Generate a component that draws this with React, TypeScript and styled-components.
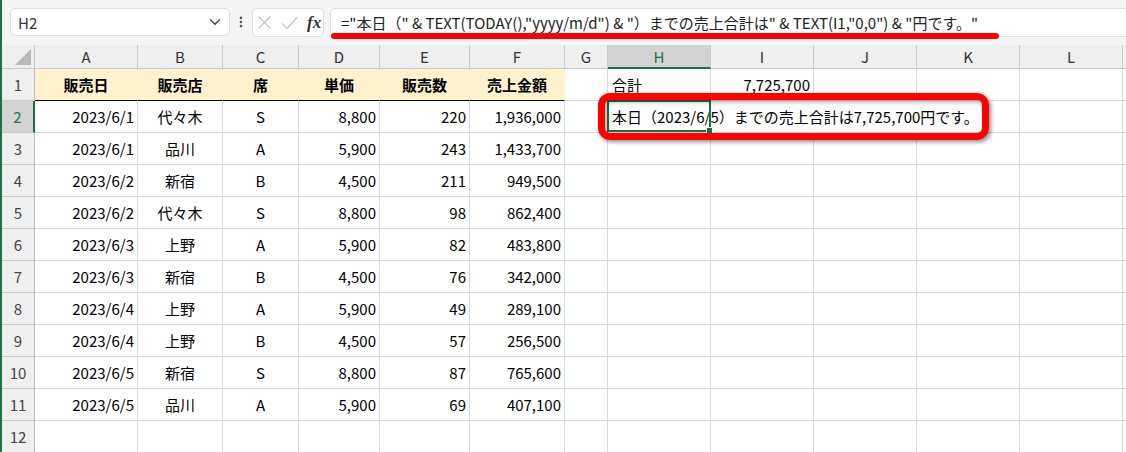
import React from "react";
import styled, { createGlobalStyle } from "styled-components";
import { ChevronDown, EllipsisVertical } from "lucide-react";

const FONT = `"Noto Sans CJK JP", "Noto Sans", sans-serif`;
const EXCEL_GREEN = "#1e7145";
const GRID = "#dadada";
const HEADER_BG = "#efefef";
const HEADER_ACTIVE = "#d3d3d3";
const HEADER_LINE = "#c9c9c9";
const TITLE_BG = "#fff2cc";
const NOTE_RED = "#ff0000";

type Align = "left" | "center" | "right";

const COLUMNS: { name: string; width: number; align: Align }[] = [
  { name: "A", width: 103, align: "right" },
  { name: "B", width: 85, align: "center" },
  { name: "C", width: 76, align: "center" },
  { name: "D", width: 81, align: "right" },
  { name: "E", width: 90, align: "right" },
  { name: "F", width: 95, align: "right" },
  { name: "G", width: 43, align: "left" },
  { name: "H", width: 103, align: "left" },
  { name: "I", width: 103, align: "right" },
  { name: "J", width: 103, align: "left" },
  { name: "K", width: 103, align: "left" },
  { name: "L", width: 103, align: "left" },
];

const TITLES = ["販売日", "販売店", "席", "単価", "販売数", "売上金額"];

const SALES = [
  ["2023/6/1", "代々木", "S", "8,800", "220", "1,936,000"],
  ["2023/6/1", "品川", "A", "5,900", "243", "1,433,700"],
  ["2023/6/2", "新宿", "B", "4,500", "211", "949,500"],
  ["2023/6/2", "代々木", "S", "8,800", "98", "862,400"],
  ["2023/6/3", "上野", "A", "5,900", "82", "483,800"],
  ["2023/6/3", "新宿", "B", "4,500", "76", "342,000"],
  ["2023/6/4", "上野", "A", "5,900", "49", "289,100"],
  ["2023/6/4", "上野", "B", "4,500", "57", "256,500"],
  ["2023/6/5", "新宿", "S", "8,800", "87", "765,600"],
  ["2023/6/5", "品川", "A", "5,900", "69", "407,100"],
];

const FORMULA =
  '="本日（" & TEXT(TODAY(),"yyyy/m/d") & "）までの売上合計は" & TEXT(I1,"0,0") & "円です。"';
const RESULT = "本日（2023/6/5）までの売上合計は7,725,700円です。";

const ROW_COUNT = 12;
const ACTIVE_COL = "H";
const ACTIVE_ROW = 2;

const GlobalStyle = createGlobalStyle`
  html, body {
    margin: 0;
    padding: 0;
    background: #ffffff;
  }
  body {
    font-family: ${FONT};
  }
`;

/* ------------------------ FORMULA BAR ---------------------- */

const Window = styled.div`
  position: relative;
  width: 1126px;
  height: 452px;
  overflow: hidden;
  box-sizing: border-box;
  border-left: 2px solid ${EXCEL_GREEN};
  background: #ffffff;
  font-family: ${FONT};
`;

const Toolbar = styled.div`
  height: 45px;
  box-sizing: border-box;
  display: flex;
  align-items: flex-start;
  padding: 8px 0 0 8px;
  background: #f5f5f5;
`;

const NameBox = styled.div`
  width: 220px;
  height: 28px;
  box-sizing: border-box;
  display: flex;
  align-items: center;
  justify-content: space-between;
  padding: 0 5px 0 7px;
  background: #ffffff;
  border: 1px solid #dedede;
  border-radius: 5px;
  font-size: 15px;
  color: #333333;
`;

const Grip = styled.div`
  width: 22px;
  height: 28px;
  display: flex;
  align-items: center;
  justify-content: center;
  color: #555555;
`;

const EditButtons = styled.div`
  width: 72px;
  height: 29px;
  box-sizing: border-box;
  display: flex;
  align-items: center;
  padding-left: 4px;
  gap: 9px;
  background: #ffffff;
  border: 1px solid #dedede;
  border-radius: 5px;
`;

const Fx = styled.span`
  font-family: "Liberation Serif", serif;
  font-style: italic;
  font-weight: 700;
  font-size: 17px;
  color: #333333;
  line-height: 1;
`;

const FormulaBox = styled.div`
  position: relative;
  flex: 1;
  height: 29px;
  margin-left: 6px;
  margin-right: -8px;
  box-sizing: border-box;
  display: flex;
  align-items: center;
  padding-left: 10px;
  background: #ffffff;
  border: 1px solid #dedede;
  border-radius: 5px;
  font-size: 15px;
  color: #222222;
  white-space: nowrap;
`;

const Underline = styled.span`
  position: absolute;
  left: 0;
  top: 24px;
  width: 668px;
  height: 6px;
  border-radius: 3px;
  background: ${NOTE_RED};
`;

/* ------------------------ SHEET ---------------------- */

const Sheet = styled.div`
  display: grid;
  grid-template-columns: 33px ${COLUMNS.map((c) => `${c.width}px`).join(" ")} 1fr;
  grid-template-rows: 24px repeat(${ROW_COUNT}, 32px);
  font-size: 15px;
`;

const Corner = styled.div`
  display: flex;
  align-items: flex-end;
  justify-content: flex-end;
  padding: 0 3px 3px 0;
  background: ${HEADER_BG};
  border-right: 1px solid ${HEADER_LINE};
  border-bottom: 1px solid ${HEADER_LINE};
`;

const ColHead = styled.div<{ $active?: boolean }>`
  box-sizing: border-box;
  display: flex;
  align-items: center;
  justify-content: center;
  background: ${(p) => (p.$active ? HEADER_ACTIVE : HEADER_BG)};
  color: ${(p) => (p.$active ? EXCEL_GREEN : "#333333")};
  border-right: 1px solid ${HEADER_LINE};
  border-bottom: ${(p) => (p.$active ? `2px solid ${EXCEL_GREEN}` : `1px solid ${HEADER_LINE}`)};
`;

const RowHead = styled.div<{ $active?: boolean }>`
  box-sizing: border-box;
  display: flex;
  align-items: center;
  justify-content: center;
  background: ${(p) => (p.$active ? HEADER_ACTIVE : HEADER_BG)};
  color: ${(p) => (p.$active ? EXCEL_GREEN : "#444444")};
  border-right: ${(p) => (p.$active ? `2px solid ${EXCEL_GREEN}` : `1px solid #bdbdbd`)};
  border-bottom: 1px solid ${HEADER_LINE};
`;

const Cell = styled.div<{ $align: Align; $title?: boolean; $hideRight?: boolean; $active?: boolean }>`
  position: ${(p) => (p.$active ? "relative" : "static")};
  z-index: ${(p) => (p.$active ? 1 : "auto")};
  box-sizing: border-box;
  min-width: 0;
  display: flex;
  align-items: center;
  justify-content: ${(p) =>
    p.$align === "right" ? "flex-end" : p.$align === "center" ? "center" : "flex-start"};
  padding: ${(p) => (p.$align === "left" ? "0 0 0 4px" : "0 3px")};
  white-space: nowrap;
  color: #000000;
  font-weight: ${(p) => (p.$title ? 700 : 400)};
  background: ${(p) => (p.$title ? TITLE_BG : "transparent")};
  border-right: 1px solid
    ${(p) => (p.$title ? TITLE_BG : p.$hideRight ? "transparent" : GRID)};
  border-bottom: 1px solid ${(p) => (p.$title ? "#000000" : GRID)};
`;

const CellText = styled.span`
  flex-shrink: 0;
`;

const Selection = styled.span`
  position: absolute;
  left: -1px;
  top: -1px;
  right: -1px;
  bottom: 0;
  border: 2px solid ${EXCEL_GREEN};
  pointer-events: none;
`;

const FillHandle = styled.span`
  position: absolute;
  right: -4px;
  bottom: -4px;
  width: 5px;
  height: 5px;
  background: ${EXCEL_GREEN};
  border: 1px solid #ffffff;
`;

const Callout = styled.div`
  position: absolute;
  left: 596px;
  top: 93px;
  width: 391px;
  height: 47px;
  box-sizing: border-box;
  border: 7px solid ${NOTE_RED};
  border-radius: 12px;
  box-shadow: 2px 2px 4px rgba(0, 0, 0, 0.45), inset 2px 2px 4px rgba(0, 0, 0, 0.35);
  pointer-events: none;
  z-index: 2;
`;

function CancelIcon() {
  return (
    <svg width="15" height="15" viewBox="0 0 15 15">
      <path d="M1.5 1.5 L13.5 13.5 M13.5 1.5 L1.5 13.5" stroke="#c4c4c4" strokeWidth="1.3" fill="none" />
    </svg>
  );
}

function EnterIcon() {
  return (
    <svg width="17" height="14" viewBox="0 0 17 14">
      <path d="M1 7.5 L6 12.5 L16 1.5" stroke="#c4c4c4" strokeWidth="1.3" fill="none" />
    </svg>
  );
}

function CornerMark() {
  return (
    <svg width="16" height="16" viewBox="0 0 16 16">
      <polygon points="16,0 16,16 0,16" fill="#b8b8b8" />
    </svg>
  );
}

function cellValue(row: number, col: number): string {
  if (row === 1 && col < TITLES.length) return TITLES[col];
  if (row >= 2 && row <= 11 && col < 6) return SALES[row - 2][col];
  if (row === 1 && COLUMNS[col].name === "H") return "合計";
  if (row === 1 && COLUMNS[col].name === "I") return "7,725,700";
  if (row === 2 && COLUMNS[col].name === "H") return RESULT;
  return "";
}

export default function App() {
  const rows = Array.from({ length: ROW_COUNT }, (_, i) => i + 1);

  return (
    <>
      <GlobalStyle />
      <Window>
        <Toolbar>
          <NameBox>
            <span>H2</span>
            <ChevronDown size={18} strokeWidth={1.8} color="#444444" />
          </NameBox>
          <Grip>
            <EllipsisVertical size={14} strokeWidth={2.6} />
          </Grip>
          <EditButtons>
            <CancelIcon />
            <EnterIcon />
            <Fx>fx</Fx>
          </EditButtons>
          <FormulaBox>
            {FORMULA}
            <Underline />
          </FormulaBox>
        </Toolbar>

        <Sheet>
          <Corner>
            <CornerMark />
          </Corner>
          {COLUMNS.map((c) => (
            <ColHead key={c.name} $active={c.name === ACTIVE_COL}>
              {c.name}
            </ColHead>
          ))}
          <ColHead />

          {rows.map((r) => (
            <React.Fragment key={r}>
              <RowHead $active={r === ACTIVE_ROW}>{r}</RowHead>
              {COLUMNS.map((c, ci) => {
                const title = r === 1 && ci < TITLES.length;
                const active = r === ACTIVE_ROW && c.name === ACTIVE_COL;
                const overflowed = r === ACTIVE_ROW && (c.name === "I" || c.name === "J");
                return (
                  <Cell
                    key={c.name}
                    $align={title ? "center" : c.align}
                    $title={title}
                    $active={active}
                    $hideRight={overflowed}
                  >
                    <CellText>{cellValue(r, ci)}</CellText>
                    {active && (
                      <Selection>
                        <FillHandle />
                      </Selection>
                    )}
                  </Cell>
                );
              })}
              <Cell $align="left" />
            </React.Fragment>
          ))}
        </Sheet>

        <Callout />
      </Window>
    </>
  );
}
